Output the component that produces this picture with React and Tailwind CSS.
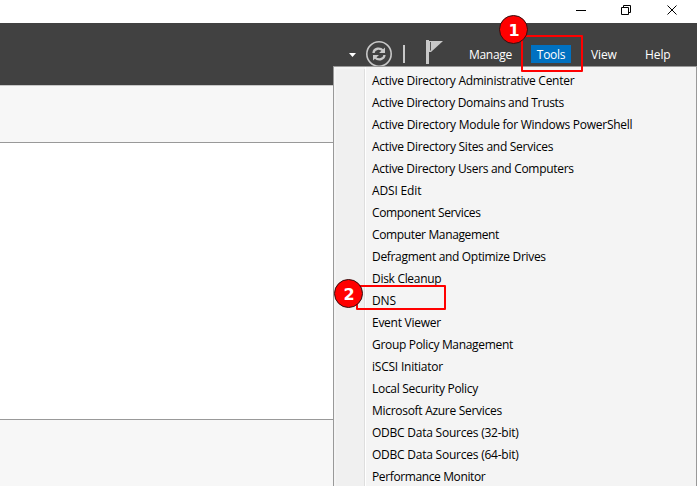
const tools = [
  ['Active Directory Administrative Center', 'tracking-[-0.28px]'],
  ['Active Directory Domains and Trusts', 'tracking-[-0.32px]'],
  ['Active Directory Module for Windows PowerShell', 'tracking-[-0.26px]'],
  ['Active Directory Sites and Services', 'tracking-[-0.27px]'],
  ['Active Directory Users and Computers', 'tracking-[-0.31px]'],
  ['ADSI Edit', 'tracking-[-0.15px]'],
  ['Component Services', 'tracking-[-0.34px]'],
  ['Computer Management', 'tracking-[-0.36px]'],
  ['Defragment and Optimize Drives', 'tracking-[-0.32px]'],
  ['Disk Cleanup', 'tracking-[-0.3px]'],
  ['DNS', 'tracking-[-0.15px]'],
  ['Event Viewer', 'tracking-[-0.27px]'],
  ['Group Policy Management', 'tracking-[-0.32px]'],
  ['iSCSI Initiator', 'tracking-[-0.22px]'],
  ['Local Security Policy', 'tracking-[-0.29px]'],
  ['Microsoft Azure Services', 'tracking-[-0.29px]'],
  ['ODBC Data Sources (32-bit)', 'tracking-[-0.23px]'],
  ['ODBC Data Sources (64-bit)', 'tracking-[-0.23px]'],
  ['Performance Monitor', 'tracking-[-0.38px]'],
];

function TitleBar() {
  return (
    <div className="flex h-[23px] shrink-0 items-start justify-end bg-white pt-[4px] pr-[17px]" aria-label="Window controls">
      <svg className="h-3 w-[104px]" viewBox="0 0 104 12" fill="none" stroke="#000">
        <path d="M0 6.500h10" />
        <path d="M45.500 3.500h7v7h-7zM47.500 3.500v-2h7v7h-2" />
        <path d="M91.500 1.500l9 9m0-9l-9 9" />
      </svg>
    </div>
  );
}

function Toolbar() {
  return (
    <div className="flex h-[62px] shrink-0 items-start justify-end bg-[#414141] pr-[16px] text-white">
      <svg className="mt-[15px] h-[30px] w-[100px]" viewBox="345 38 100 30" fill="none">
        <path d="M349 53h7l-3.500 4z" fill="#fff" />
        <circle cx="379" cy="54" r="12.200" stroke="#c8c8c8" strokeWidth="1.600" />
        <path d="M373.500 53c.5-5 6.500-5.500 9.500-2.500M384.500 55c-.5 5-6.500 5.500-9.500 2.500" stroke="#c8c8c8" strokeWidth="2.300" />
        <path d="M385 47.500v5.500h-6zM373 60.500v-5.500h6z" fill="#c8c8c8" />
        <path d="M403 45h2v18h-2zM426 40h3v24h-3z" fill="#c8c8c8" />
        <path d="M429 41h14L431 52h-2z" fill="#c8c8c8" />
        <path d="M430.500 42v8.500" stroke="#555" />
      </svg>
      <nav className="mt-[22px] flex h-[18px] items-center text-[12px] leading-[18px]">
        <span className="ml-[24px] w-[62px] pt-[2px] tracking-[-0.3px]">Manage</span>
        <span className="flex h-[18px] w-[40px] items-center justify-center bg-[#0071c1] pt-[2px] tracking-[-0.3px]">Tools</span>
        <span className="ml-[20px] w-[54px] pt-[2px] tracking-[-0.1px]">View</span>
        <span className="w-[36px] pt-[2px] tracking-[-0.1px]">Help</span>
      </nav>
    </div>
  );
}

function ToolsMenu() {
  return (
    <div className="absolute top-[66px] left-[333px] flex h-[420px] w-[364px] overflow-hidden border-t border-r border-l border-[#999] bg-[#f4f4f4]">
      <div className="mt-[2px] ml-[2px] w-[29px] shrink-0 border-r border-[#dedede] bg-[#f0f0f0]" />
      <ul className="border-l border-white pt-[3px] pl-[6px] text-[12px] leading-[22px] text-black">
        {tools.map(([name, tracking]) => (
          <li key={name} className="h-[22px] whitespace-nowrap">
            <span className={tracking}>{name}</span>
          </li>
        ))}
      </ul>
    </div>
  );
}

function Step({ number, className }) {
  return (
    <div className={`absolute flex size-[29px] items-center justify-center rounded-full border border-[#301010] bg-[#f00] pt-[2px] pl-px font-['DejaVu_Sans'] text-[16px] leading-none font-bold text-white ${className}`}>
      {number}
    </div>
  );
}

export default function App() {
  return (
    <main className="relative flex h-[486px] w-[697px] flex-col overflow-hidden bg-white font-['Open_Sans','Noto_Sans',sans-serif]">
      <TitleBar />
      <Toolbar />
      <div className="h-[58px] shrink-0 border-t border-b border-t-[#c8c8c8] border-b-[#999] bg-[#f7f7f7]" />
      <div className="h-[276px] shrink-0 bg-white" />
      <div className="flex-1 border-t border-[#999] bg-[#f7f7f7]" />
      <ToolsMenu />
      <div className="absolute top-[35px] left-[521px] h-[37px] w-[62px] rounded-[1px] border-2 border-[#f00]" />
      <div className="absolute top-[285px] left-[356px] h-[25px] w-[90px] rounded-[1px] border-2 border-[#f00]" />
      <Step number="1" className="top-[15px] left-[499px]" />
      <Step number="2" className="top-[279px] left-[334px]" />
    </main>
  );
}
